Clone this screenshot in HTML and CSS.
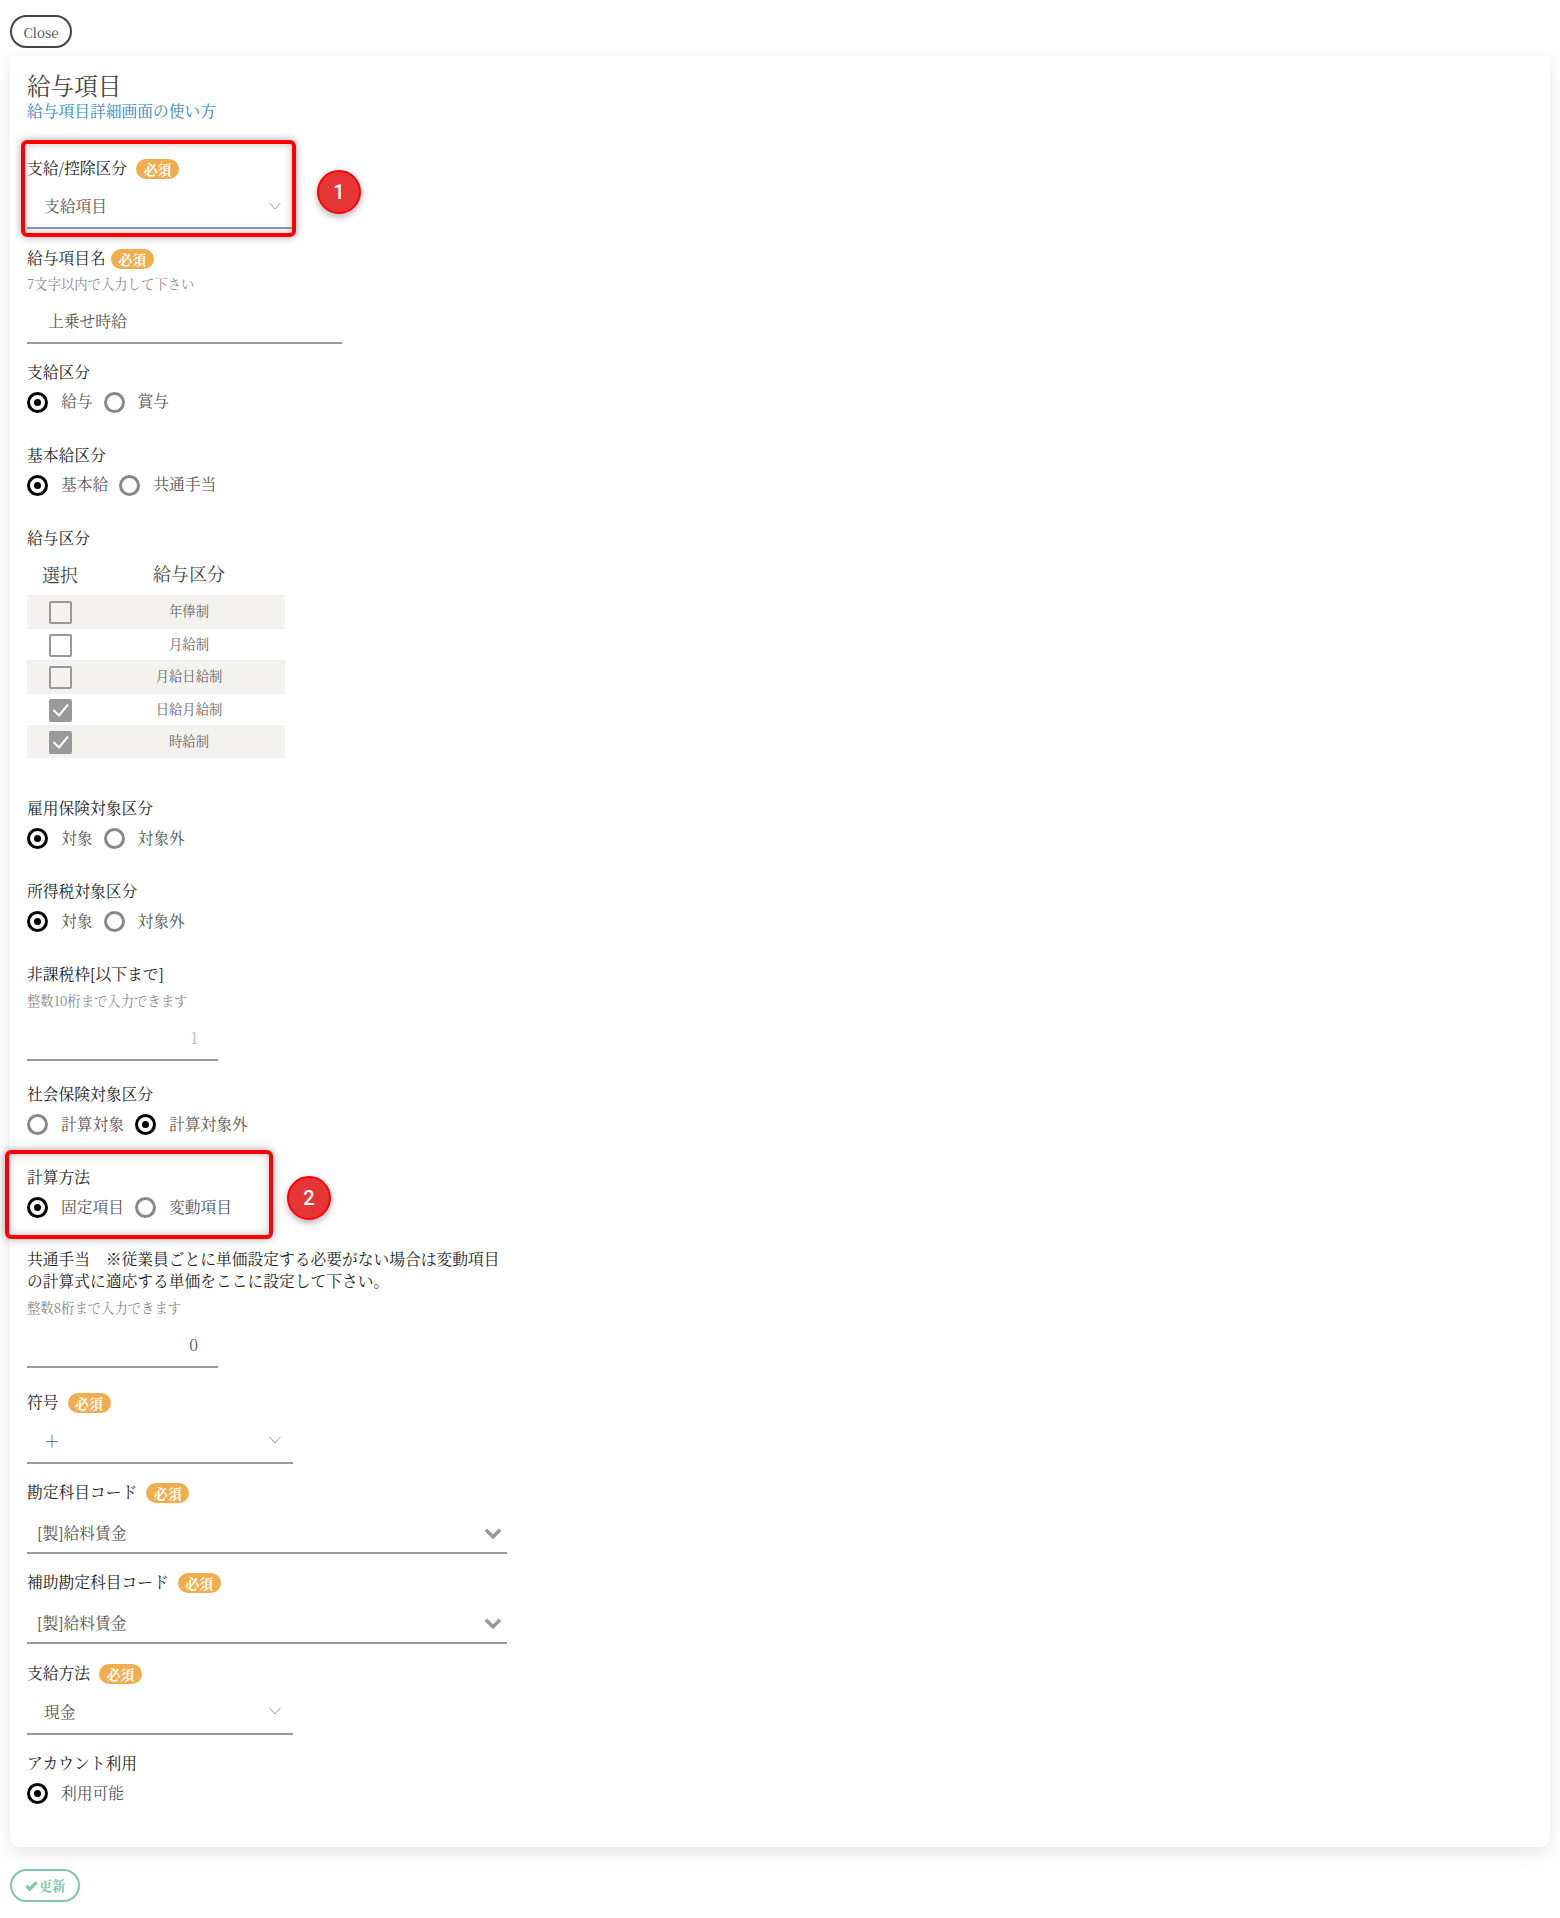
FILE: index.html
```html
<!DOCTYPE html>
<html lang="ja">
<head>
<meta charset="utf-8">
<title>給与項目</title>
<link rel="stylesheet" href="styles.css">
</head>
<body>
<div class="page">
  <button class="btn btn-close">Close</button>
  <main class="card">
    <h1 class="title">給与項目</h1>
    <a class="link">給与項目詳細画面の使い方</a>

    <section class="field first">
      <div class="label">支給/控除区分<span class="badge">必須</span></div>
      <div class="select"><span>支給項目</span><svg class="chev" viewBox="0 0 12 8"><path d="M.5.8 6 7 11.500.8"/></svg></div>
    </section>

    <section class="field">
      <div class="label">給与項目名<span class="badge tight">必須</span></div>
      <div class="hint">7文字以内で入力して下さい</div>
      <div class="input text-input">上乗せ時給</div>
    </section>

    <section class="field">
      <div class="label">支給区分</div>
      <div class="radios">
        <span class="radio on"></span><span class="rl">給与</span>
        <span class="radio"></span><span class="rl">賞与</span>
      </div>
    </section>

    <section class="field">
      <div class="label">基本給区分</div>
      <div class="radios">
        <span class="radio on"></span><span class="rl">基本給</span>
        <span class="radio"></span><span class="rl">共通手当</span>
      </div>
    </section>

    <section class="field table-field">
      <div class="label">給与区分</div>
      <div class="tbl">
        <div class="tr th"><span class="c1">選択</span><span class="c2">給与区分</span></div>
        <div class="tr alt"><span class="c1"><span class="cb"></span></span><span class="c2">年俸制</span></div>
        <div class="tr"><span class="c1"><span class="cb"></span></span><span class="c2">月給制</span></div>
        <div class="tr alt"><span class="c1"><span class="cb"></span></span><span class="c2">月給日給制</span></div>
        <div class="tr"><span class="c1"><span class="cb on"><svg viewBox="0 0 19 19"><path d="M2.500 9 8 14.500 17 3.500"/></svg></span></span><span class="c2">日給月給制</span></div>
        <div class="tr alt"><span class="c1"><span class="cb on"><svg viewBox="0 0 19 19"><path d="M2.500 9 8 14.500 17 3.500"/></svg></span></span><span class="c2">時給制</span></div>
      </div>
    </section>

    <section class="field">
      <div class="label">雇用保険対象区分</div>
      <div class="radios">
        <span class="radio on"></span><span class="rl">対象</span>
        <span class="radio"></span><span class="rl">対象外</span>
      </div>
    </section>

    <section class="field">
      <div class="label">所得税対象区分</div>
      <div class="radios">
        <span class="radio on"></span><span class="rl">対象</span>
        <span class="radio"></span><span class="rl">対象外</span>
      </div>
    </section>

    <section class="field num-field">
      <div class="label">非課税枠[以下まで]</div>
      <div class="hint">整数10桁まで入力できます</div>
      <div class="input num-input muted">1</div>
    </section>

    <section class="field">
      <div class="label">社会保険対象区分</div>
      <div class="radios">
        <span class="radio"></span><span class="rl">計算対象</span>
        <span class="radio on"></span><span class="rl">計算対象外</span>
      </div>
    </section>

    <section class="field">
      <div class="label">計算方法</div>
      <div class="radios">
        <span class="radio on"></span><span class="rl">固定項目</span>
        <span class="radio"></span><span class="rl">変動項目</span>
      </div>
    </section>

    <section class="field num-field num-field-wide">
      <div class="label wrap">共通手当　※従業員ごとに単価設定する必要がない場合は変動項目の計算式に適応する単価をここに設定して下さい。</div>
      <div class="hint hint-wide">整数8桁まで入力できます</div>
      <div class="input num-input">0</div>
    </section>

    <section class="field">
      <div class="label">符号<span class="badge">必須</span></div>
      <div class="select"><span>＋</span><svg class="chev" viewBox="0 0 12 8"><path d="M.5.8 6 7 11.500.8"/></svg></div>
    </section>

    <section class="field">
      <div class="label">勘定科目コード<span class="badge">必須</span></div>
      <div class="select wide"><span>[製]給料賃金</span><svg class="chev bold" viewBox="0 0 16 10"><path d="M1.500 1.500 8 8l6.500-6.500"/></svg></div>
    </section>

    <section class="field sub-code">
      <div class="label">補助勘定科目コード<span class="badge">必須</span></div>
      <div class="select wide"><span>[製]給料賃金</span><svg class="chev bold" viewBox="0 0 16 10"><path d="M1.500 1.500 8 8l6.500-6.500"/></svg></div>
    </section>

    <section class="field">
      <div class="label">支給方法<span class="badge">必須</span></div>
      <div class="select"><span>現金</span><svg class="chev" viewBox="0 0 12 8"><path d="M.5.8 6 7 11.500.8"/></svg></div>
    </section>

    <section class="field last">
      <div class="label">アカウント利用</div>
      <div class="radios">
        <span class="radio on"></span><span class="rl">利用可能</span>
      </div>
    </section>
  </main>
  <button class="btn btn-save"><svg class="check" viewBox="0 0 14 11"><path d="M1.500 5.500 5 9l7.500-7.500"/></svg>更新</button>

  <div class="mark mark1"></div>
  <div class="num num1">1</div>
  <div class="mark mark2"></div>
  <div class="num num2">2</div>
</div>
</body>
</html>
```
FILE: styles.css
```css
* { box-sizing: border-box; }
html, body { margin: 0; padding: 0; background: #fff; }
body { font-family: "Noto Serif CJK JP", "Liberation Serif", "Noto Sans CJK JP", serif; color: #333; font-size: 15.750px; }
.page { position: relative; width: 1560px; height: 1918px; padding: 15px 10px 0; }

.btn { display: flex; align-items: center; justify-content: center; height: 33px; padding: 0; background: #fff; font-family: inherit; border-radius: 17px; }
.btn-close { width: 62px; border: 2px solid #444; color: #444; font-size: 13.330px; padding-top: 1px; }
.btn-save { width: 70px; margin-top: 22px; border: 2px solid #7fc8a5; color: #7fc8a5; font-size: 13.330px; font-weight: bold; }
.check { width: 13px; height: 10px; margin-right: 1px; }
.check path { fill: none; stroke: #7fc8a5; stroke-width: 3.500; }

.card { width: 1540px; height: 1791px; margin-top: 8px; padding: 13px 17px 0; background: #fff; border-radius: 0 0 10px 10px; box-shadow: 0 6px 18px rgba(0,0,0,.1); }
.title { margin: 0; font-size: 23.600px; font-weight: normal; line-height: 32px; color: #444; }
.link { display: block; line-height: 20px; color: #2f86c1; font-size: 15.750px; }

.field { margin-bottom: 25px; }
.first { margin-top: 34px; }
.label { display: flex; align-items: center; height: 24px; font-size: 15.750px; color: #222; }
.label.wrap { display: block; height: auto; width: 480px; padding: 0; margin-top: 1px; line-height: 22px; }
.badge { display: inline-block; width: 43px; height: 20px; margin: 3px 0 0 9px; border-radius: 10px; background: #f0ad4e; color: #fff; font-size: 14px; font-weight: bold; line-height: 20px; text-align: center; }
.badge.tight { margin-left: 5px; }

.hint { height: 20px; margin-top: 5px; line-height: 20px; font-size: 13.330px; color: #888; }
.hint-wide { margin-top: 6px; }

.select { display: flex; align-items: center; justify-content: space-between; width: 266px; height: 50px; padding: 5px 12px 0 17px; border-bottom: 2px solid #999; color: #555; }
.select.wide { width: 480px; padding-left: 10px; padding-right: 4px; padding-top: 10px; }
.chev { width: 12px; height: 8px; flex: none; }
.chev path { fill: none; stroke: #999; stroke-width: 1; }
.chev.bold { width: 18px; height: 11px; margin: 2px 1px 0 0; }
.chev.bold path { stroke: #999; stroke-width: 3.200; }
.field:has(.select) { margin-bottom: 16px; }
.field.sub-code { margin-bottom: 17px; }
.field:has(.text-input) { margin-bottom: 15px; }

.input { height: 50px; border-bottom: 2px solid #999; padding-top: 16px; line-height: 22px; color: #555; }
.text-input { width: 315px; padding-left: 21px; }
.num-input { width: 191px; text-align: right; padding: 16px 20px 0 0; }
.muted { color: #bbb; }
.num-field { margin-bottom: 21px; }
.num-field-wide { margin-bottom: 22px; }

.radios { display: flex; align-items: center; height: 30px; margin-top: 4px; }
.radio { position: relative; width: 21px; height: 21px; margin-right: 13px; border: 3px solid #888; border-radius: 50%; flex: none; }
.radio.on { border-color: #000; }
.radio.on::after { content: ""; position: absolute; left: 4px; top: 4px; width: 7px; height: 7px; border-radius: 50%; background: #000; }
.rl { margin-right: 11px; padding-bottom: 3px; color: #555; }

.table-field { margin-bottom: 38px; }
.tbl { width: 258px; }
.tr { display: flex; align-items: center; height: 32.600px; border-top: 1px solid #eef0f5; color: #666; font-size: 13.330px; }
.th { height: 46px; border: 0; font-size: 18px; color: #444; padding-top: 3px; }
.alt { background: #f3f2ef; }
.tr:last-child { border-bottom: 1px solid #eef0f5; }
.c1 { display: flex; justify-content: center; width: 66px; }
.c2 { flex: 1; padding-bottom: 2px; text-align: center; }
.cb { display: block; width: 23px; height: 23px; border: 2px solid #999; border-radius: 2px; margin-top: 2px; }
.cb.on { background: #999; }
.cb svg { display: block; width: 19px; height: 19px; }
.cb path { fill: none; stroke: #fff; stroke-width: 2; }

.mark { position: absolute; border: 4px solid #f00; border-radius: 6px; box-shadow: 0 0 8px rgba(0,0,0,.35), inset 0 0 8px rgba(0,0,0,.25); }
.mark1 { left: 21px; top: 140px; width: 275px; height: 97px; }
.mark2 { left: 5px; top: 1150px; width: 268px; height: 89px; }
.num { position: absolute; display: flex; align-items: center; justify-content: center; width: 44px; height: 44px; border: 2px solid #f00; border-radius: 50%; background: #e53535; color: #fff; font-family: Roboto, sans-serif; font-size: 20px; font-weight: 500; box-shadow: 0 3px 7px rgba(0,0,0,.3); }
.num1 { left: 317px; top: 170px; }
.num2 { left: 287px; top: 1176px; }
```
